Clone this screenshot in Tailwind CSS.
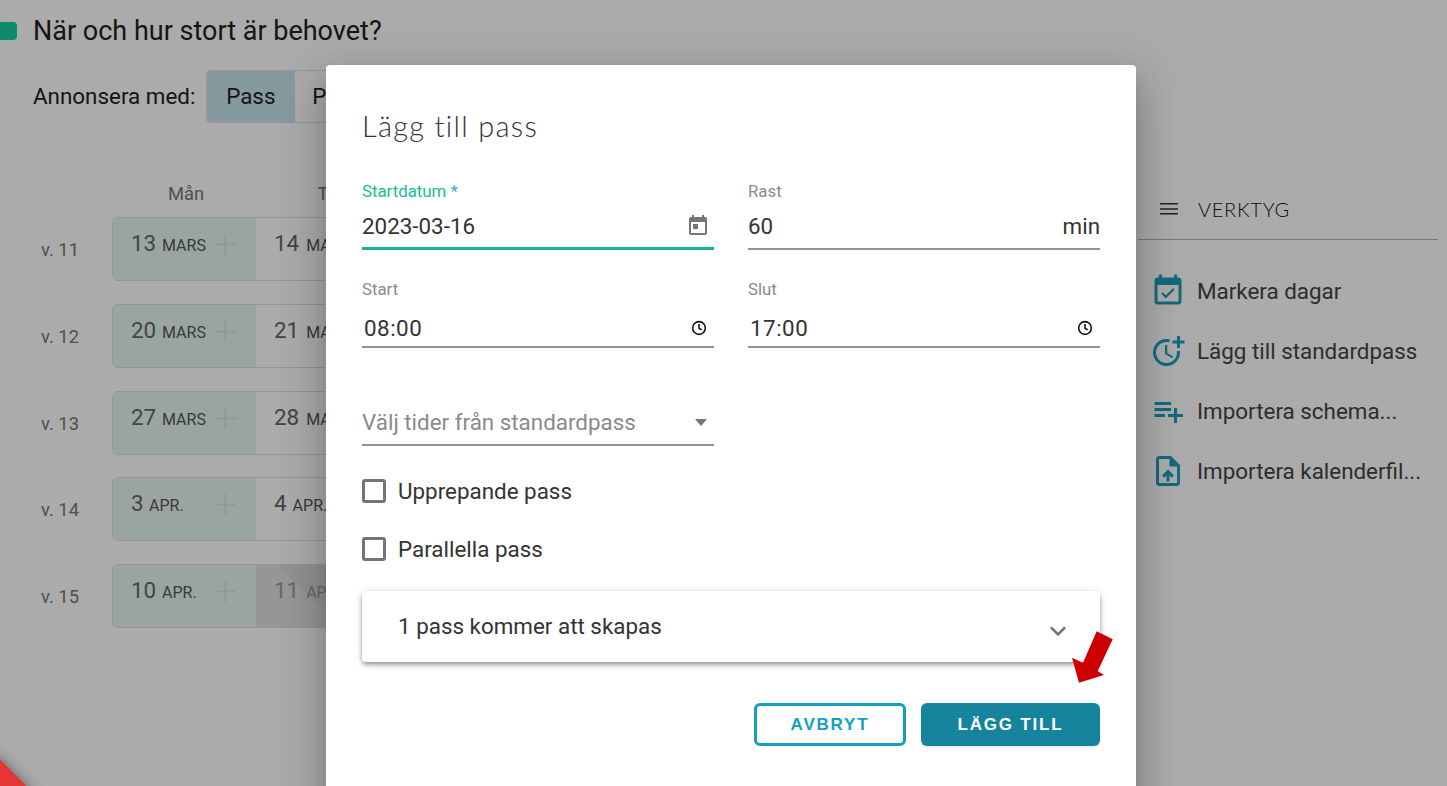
<!DOCTYPE html>
<html lang="sv">
<head>
<meta charset="UTF-8">
<title>Lägg till pass</title>
<script src="https://cdn.jsdelivr.net/npm/@tailwindcss/browser@4"></script>
</head>
<body class="bg-white font-['Roboto',sans-serif] text-[#212121]">
<div class="relative h-[786px] w-[1447px] overflow-hidden">

  <!-- page behind the dialog -->
  <div class="flex h-full">
    <div class="w-[1138px] shrink-0">
      <div class="flex h-[62px] items-center gap-4">
        <span class="h-[18px] w-[17px] rounded-r-[4px] bg-[#16cf9b]"></span>
        <h2 class="text-[27px]">När och hur stort är behovet?</h2>
      </div>
      <div class="mt-2 flex items-center pl-[33px]">
        <span class="text-[22.4px]">Annonsera med:</span>
        <div class="ml-[11px] flex h-[53px] rounded border border-[#dedede] text-[22.4px]">
          <span class="flex w-[87px] items-center justify-center rounded-l bg-[#c8e4ed]">Pass</span>
          <span class="flex w-[120px] items-center border-l border-[#dedede] pl-[17px]">Period</span>
        </div>
      </div>
      <div class="mt-[58px] ml-[112px] flex h-[25px] items-center text-[18.4px] text-[#777]">
        <span class="w-[148px] text-center">Mån</span>
        <span class="w-[140px] text-center">Tis</span>
      </div>
      <div class="mt-[11px] flex flex-col gap-[22.75px]">
        <div class="flex items-center">
          <span class="mt-[2px] w-[112px] pl-[41px] text-[18.4px] text-[#777]">v. 11</span>
          <div class="flex h-[64px] w-[600px] overflow-hidden rounded-md border border-[#dedede]">
            <div class="flex w-[143px] items-start bg-[#e6f6f2] pt-[9px] pl-[18px]">
              <span class="w-[31px] text-[22.4px] text-[#666]">13</span><span class="mt-[7px] w-[53px] text-[16px] text-[#555]">MARS</span>
              <svg class="mt-[7px] h-[21px] w-[21px]" viewBox="0 0 21 21" fill="#d5e6e0"><path d="M9.5 0h2v9.5H21v2h-9.5V21h-2v-9.5H0v-2h9.5z"/></svg>
            </div>
            <div class="flex items-start pt-[9px] pl-[18px]"><span class="text-[22.4px] text-[#666]">14</span><span class="mt-[7px] ml-[7px] text-[16px] text-[#555]">MARS</span></div>
          </div>
        </div>
        <div class="flex items-center">
          <span class="mt-[2px] w-[112px] pl-[41px] text-[18.4px] text-[#777]">v. 12</span>
          <div class="flex h-[64px] w-[600px] overflow-hidden rounded-md border border-[#dedede]">
            <div class="flex w-[143px] items-start bg-[#e6f6f2] pt-[9px] pl-[18px]">
              <span class="w-[31px] text-[22.4px] text-[#666]">20</span><span class="mt-[7px] w-[53px] text-[16px] text-[#555]">MARS</span>
              <svg class="mt-[7px] h-[21px] w-[21px]" viewBox="0 0 21 21" fill="#d5e6e0"><path d="M9.5 0h2v9.5H21v2h-9.5V21h-2v-9.5H0v-2h9.5z"/></svg>
            </div>
            <div class="flex items-start pt-[9px] pl-[18px]"><span class="text-[22.4px] text-[#666]">21</span><span class="mt-[7px] ml-[7px] text-[16px] text-[#555]">MARS</span></div>
          </div>
        </div>
        <div class="flex items-center">
          <span class="mt-[2px] w-[112px] pl-[41px] text-[18.4px] text-[#777]">v. 13</span>
          <div class="flex h-[64px] w-[600px] overflow-hidden rounded-md border border-[#dedede]">
            <div class="flex w-[143px] items-start bg-[#e6f6f2] pt-[9px] pl-[18px]">
              <span class="w-[31px] text-[22.4px] text-[#666]">27</span><span class="mt-[7px] w-[53px] text-[16px] text-[#555]">MARS</span>
              <svg class="mt-[7px] h-[21px] w-[21px]" viewBox="0 0 21 21" fill="#d5e6e0"><path d="M9.5 0h2v9.5H21v2h-9.5V21h-2v-9.5H0v-2h9.5z"/></svg>
            </div>
            <div class="flex items-start pt-[9px] pl-[18px]"><span class="text-[22.4px] text-[#666]">28</span><span class="mt-[7px] ml-[7px] text-[16px] text-[#555]">MARS</span></div>
          </div>
        </div>
        <div class="flex items-center">
          <span class="mt-[2px] w-[112px] pl-[41px] text-[18.4px] text-[#777]">v. 14</span>
          <div class="flex h-[64px] w-[600px] overflow-hidden rounded-md border border-[#dedede]">
            <div class="flex w-[143px] items-start bg-[#e6f6f2] pt-[9px] pl-[18px]">
              <span class="w-[18px] text-[22.4px] text-[#666]">3</span><span class="mt-[7px] w-[66px] text-[16px] text-[#555]">APR.</span>
              <svg class="mt-[7px] h-[21px] w-[21px]" viewBox="0 0 21 21" fill="#d5e6e0"><path d="M9.5 0h2v9.5H21v2h-9.5V21h-2v-9.5H0v-2h9.5z"/></svg>
            </div>
            <div class="flex items-start pt-[9px] pl-[18px]"><span class="text-[22.4px] text-[#666]">4</span><span class="mt-[7px] ml-[6px] text-[16px] text-[#555]">APR.</span></div>
          </div>
        </div>
        <div class="flex items-center">
          <span class="mt-[2px] w-[112px] pl-[41px] text-[18.4px] text-[#777]">v. 15</span>
          <div class="flex h-[64px] w-[600px] overflow-hidden rounded-md border border-[#dedede]">
            <div class="flex w-[143px] items-start bg-[#e6f6f2] pt-[9px] pl-[18px]">
              <span class="w-[31px] text-[22.4px] text-[#666]">10</span><span class="mt-[7px] w-[53px] text-[16px] text-[#555]">APR.</span>
              <svg class="mt-[7px] h-[21px] w-[21px]" viewBox="0 0 21 21" fill="#d5e6e0"><path d="M9.5 0h2v9.5H21v2h-9.5V21h-2v-9.5H0v-2h9.5z"/></svg>
            </div>
            <div class="flex flex-1 items-start bg-[repeating-linear-gradient(45deg,#e0e0e0_0,#e0e0e0_60px,#d8d8d8_60px,#d8d8d8_100px)] pt-[9px] pl-[18px]"><span class="text-[22.4px] text-[#999]">11</span><span class="mt-[7px] ml-[7px] text-[16px] text-[#999]">APR.</span></div>
          </div>
        </div>
      </div>
    </div>

    <aside class="flex-1 pt-[179px]">
      <div class="flex h-[61px] w-[300px] items-center border-b border-[#b4b4b4] pl-[19px]">
        <svg class="h-6 w-6" viewBox="0 0 24 24" fill="#333"><path d="M3 17.6h18V16H3zm0-4.8h18v-1.6H3zM3 6v1.6h18V6z"/></svg>
        <span class="ml-[17px] font-['Lato',sans-serif] text-[20px] font-light tracking-[.7px] text-[#111]">VERKTYG</span>
      </div>
      <ul class="mt-[21px] flex flex-col text-[22.4px] text-[#444]">
        <li class="flex h-[60px] items-center">
          <svg class="ml-[12px] h-9 w-9 shrink-0" viewBox="0 0 24 24" fill="#1b9fba"><path d="M16.53 11.06L15.47 10l-4.88 4.88-2.12-2.12-1.06 1.06L10.59 17l5.94-5.94zM19 3h-1V1h-2v2H8V1H6v2H5c-1.11 0-1.99.9-1.99 2L3 19c0 1.1.89 2 2 2h14c1.1 0 2-.9 2-2V5c0-1.1-.9-2-2-2zm0 16H5V8h14v11z"/></svg>
          <span class="mt-[2px] ml-[11px] whitespace-nowrap">Markera dagar</span>
        </li>
        <li class="flex h-[60px] items-center">
          <svg class="ml-[12px] h-9 w-9 shrink-0" viewBox="0 0 24 24" fill="#1b9fba"><path d="M10 8v6l4.7 2.9.8-1.2-4-2.4V8zM17.92 12c.05.33.08.66.08 1 0 3.9-3.1 7-7 7s-7-3.1-7-7 3.1-7 7-7c.7 0 1.37.1 2 .29V4.23C12.36 4.08 11.69 4 11 4c-5 0-9 4-9 9s4 9 9 9 9-4 9-9c0-.34-.02-.67-.06-1h-2.02zM20 5V2h-2v3h-3v2h3v3h2V7h3V5z"/></svg>
          <span class="mt-[2px] ml-[11px] whitespace-nowrap">Lägg till standardpass</span>
        </li>
        <li class="flex h-[60px] items-center">
          <svg class="ml-[12px] h-9 w-9 shrink-0" viewBox="0 0 24 24" fill="#1b9fba"><path d="M14 10H3v2h11v-2zm0-4H3v2h11V6zm4 8v-4h-2v4h-4v2h4v4h2v-4h4v-2h-4zM3 16h7v-2H3v2z"/></svg>
          <span class="mt-[2px] ml-[11px] whitespace-nowrap">Importera schema...</span>
        </li>
        <li class="flex h-[60px] items-center">
          <svg class="ml-[12px] h-9 w-9 shrink-0" viewBox="0 0 24 24" fill="#1b9fba"><path d="M14 2H6c-1.1 0-1.99.9-1.99 2L4 20c0 1.1.89 2 1.99 2H18c1.1 0 2-.9 2-2V8l-6-6zm4 18H6V4h7v5h5v11zM8 15.01l1.41 1.41L11 14.84V19h2v-4.16l1.59 1.59L16 15.01 12.01 11 8 15.01z"/></svg>
          <span class="mt-[2px] ml-[11px] whitespace-nowrap">Importera kalenderfil...</span>
        </li>
      </ul>
    </aside>
  </div>

  <!-- backdrop -->
  <div class="absolute inset-0 bg-black/33"></div>

  <!-- corner ribbon -->
  <div class="absolute bottom-[-33px] left-[-33px] h-[54px] w-[54px] rotate-45 bg-[#e53535] shadow-[0_0_14px_rgba(0,0,0,.45)]"></div>

  <!-- dialog -->
  <div class="absolute top-[65px] left-[326px] h-[760px] w-[810px] rounded bg-white px-9 shadow-[0_11px_15px_-7px_rgba(0,0,0,.2),0_24px_38px_3px_rgba(0,0,0,.14),0_9px_46px_8px_rgba(0,0,0,.12)]">
    <h1 class="mt-[43px] h-9 font-['Lato',sans-serif] text-[29px] leading-9 font-light tracking-[1.3px] text-[#333]">Lägg till pass</h1>

    <div class="mt-[37px] grid grid-cols-[352px_352px] gap-x-[34px] gap-y-[29px]">
      <div class="h-[69px] border-b-[3px] border-[#12b58f]">
        <div class="h-5 text-[16.8px] leading-[21px] text-[#15bd97]">Startdatum <span class="text-[#2fb0c8]">*</span></div>
        <div class="mt-[7px] flex h-9 items-center justify-between text-[22.4px] text-[#333]">
          <span class="mt-[2px]">2023-03-16</span>
          <svg class="mr-1 h-6 w-6" viewBox="0 0 24 24" fill="#757575"><path d="M19 3h-1V1h-2v2H8V1H6v2H5c-1.11 0-1.99.9-1.99 2L3 19c0 1.1.89 2 2 2h14c1.1 0 2-.9 2-2V5c0-1.1-.9-2-2-2zm0 16H5V8h14v11zM7 10h5v5H7z"/></svg>
        </div>
      </div>
      <div class="h-[69px] border-b-2 border-[#949494]">
        <div class="h-5 text-[16.8px] leading-[21px] text-[#8a8a8a]">Rast</div>
        <div class="mt-[7px] flex h-9 items-center justify-between text-[22.4px] text-[#333]">
          <span class="mt-[2px]">60</span><span class="mt-[2px]">min</span>
        </div>
      </div>
      <div class="h-[69px] border-b-2 border-[#949494]">
        <div class="h-5 text-[16.8px] leading-[21px] text-[#8a8a8a]">Start</div>
        <div class="mt-[11px] flex h-9 items-center justify-between text-[22.4px] text-[#333]">
          <span class="mt-[2px] pl-[2px] tracking-[.5px]">08:00</span>
          <svg class="mr-[7px] h-4 w-4" viewBox="0 0 24 24" fill="none" stroke="#111" stroke-width="2.4"><circle cx="12" cy="12" r="9.5"/><path d="M12 6v6.5l4 2.2"/></svg>
        </div>
      </div>
      <div class="h-[69px] border-b-2 border-[#949494]">
        <div class="h-5 text-[16.8px] leading-[21px] text-[#8a8a8a]">Slut</div>
        <div class="mt-[11px] flex h-9 items-center justify-between text-[22.4px] text-[#333]">
          <span class="mt-[2px] pl-[2px] tracking-[.5px]">17:00</span>
          <svg class="mr-[7px] h-4 w-4" viewBox="0 0 24 24" fill="none" stroke="#111" stroke-width="2.4"><circle cx="12" cy="12" r="9.5"/><path d="M12 6v6.5l4 2.2"/></svg>
        </div>
      </div>
    </div>

    <div class="mt-[52px] flex h-[46px] w-[352px] items-center justify-between border-b-2 border-[#949494] text-[22.4px] text-[#8a8a8a]">
      <span class="mt-[2px]">Välj tider från standardpass</span>
      <span class="mr-[7px] h-0 w-0 border-x-[6.5px] border-t-[7px] border-x-transparent border-t-[#757575]"></span>
    </div>

    <label class="mt-[24px] flex h-[42px] items-center gap-3 text-[22.4px] text-[#333]">
      <span class="h-6 w-6 rounded-[3px] border-[3px] border-[#757575]"></span><span class="mt-[2px]">Upprepande pass</span>
    </label>
    <label class="mt-4 flex h-[42px] items-center gap-3 text-[22.4px] text-[#333]">
      <span class="h-6 w-6 rounded-[3px] border-[3px] border-[#757575]"></span><span class="mt-[2px]">Parallella pass</span>
    </label>

    <div class="mt-[21px] flex h-[71px] items-center justify-between rounded bg-white pr-[26px] pl-9 text-[22.4px] text-[#333] shadow-[0_2px_4px_-1px_rgba(0,0,0,.3),0_4px_5px_0_rgba(0,0,0,.16),0_1px_10px_0_rgba(0,0,0,.12)]">
      <span>1 pass kommer att skapas</span>
      <svg class="mt-[9px] h-8 w-8" viewBox="0 0 24 24" fill="#757575"><path d="M16.59 8.59L12 13.17 7.41 8.59 6 10l6 6 6-6z"/></svg>
    </div>

    <div class="mt-[41px] flex justify-end gap-[15px] font-['Liberation_Sans',sans-serif] text-[17px] font-bold tracking-[1.8px]">
      <button class="h-[43px] w-[152px] rounded-md border-[3px] border-[#14a0bd] bg-white text-[#14a0bd]">AVBRYT</button>
      <button class="h-[43px] w-[179px] rounded-md bg-[#16849d] text-white shadow-sm">LÄGG TILL</button>
    </div>
  </div>

  <!-- annotation arrow -->
  <svg class="absolute top-[625px] left-[1065px] h-[65px] w-[55px]" viewBox="1065 625 55 65" fill="#cc0000"><path d="M1096.7 631.3 1112.7 639.3 1097.7 671 1104 675 1079 682.7 1072 657.7 1083 662.7z"/></svg>
</div>
</body>
</html>
